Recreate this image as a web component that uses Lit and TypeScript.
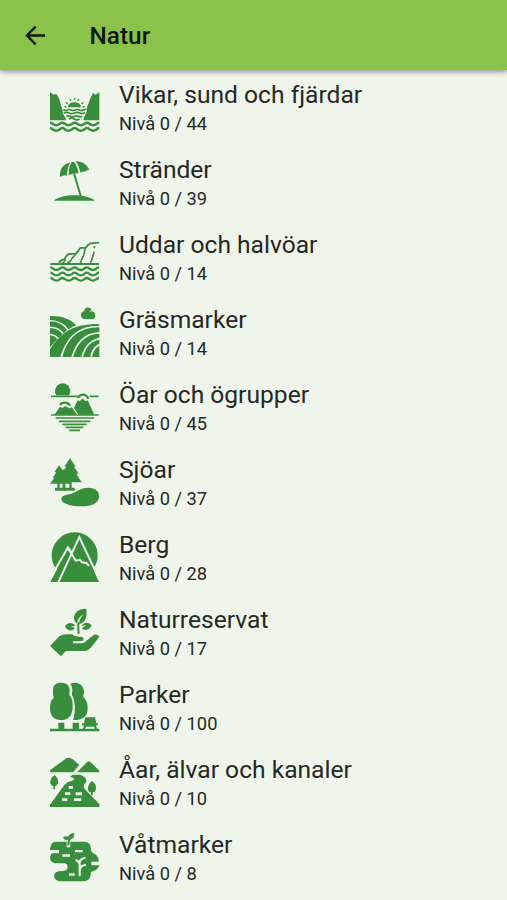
import { LitElement, html, css, svg } from "lit";
import { customElement, property } from "lit/decorators.js";

// Scalloped water line: arcs that dip between rounded crests.
const ripple = (y: number, x = 31, n = 3, w = 49, h = 7) => {
  let d = `M${x} ${y}`;
  for (let i = 0; i < n; i++) {
    d += `c${w * 0.18} 0 ${w * 0.25} ${h} ${w / 2} ${h}s${w * 0.32} ${-h} ${w / 2} ${-h}`;
  }
  return d;
};

const icons = {
  bay: svg`
    <path d="M30 37L42 44L49 41L58 57L62 74L68 91L69 101L76 113L78 121H30Z M178 37L166 44L159 39L150 57L146 70L142 77L140 91L139 98L132 112L130 121H178Z"/>
    <path d="M84 82C84 72 92 67 103 67S123 72 123 82Z"/>
    <g class="line" stroke-width="4.2">
      <path d="M73 80l6 1M128 81l6-1M78 67l5 5M125 72l5-5M90 57l3 6M114 63l3-6M104 54v5"/>
      <path d="M70 89q6 4 12 1t12 0t12 0t12 0t12 0t9-1" stroke-width="5"/>
      <path d="M71 99q8-4 16 0t16 0t16 0t16-1" stroke-width="5"/>
      <path d="M79 109q6-3 12 0t12 0t12 0t12 0" stroke-width="5"/>
      <path d="M87 117q8-5 16 0t16 0" stroke-width="5"/>
    </g>
    <path class="line" stroke-width="7.5" d="${ripple(128, 30, 4, 37, 8)}"/>
    <path class="line" stroke-width="7.5" d="${ripple(144, 30, 4, 37, 8)}"/>`,
  beach: svg`
    <path d="M60 81C59 58 68 43 91 37C84 50 81 62 81 77Q69 74 60 81Z"/>
    <path d="M95 36L102 35C109 43 113 55 116 70Q100 68 86 76C86 60 88 47 95 36Z"/>
    <path d="M107 34C126 33 142 44 148 60Q139 59 134 65Q128 63 121 68C118 54 114 43 107 34Z"/>
    <path class="line" stroke-width="6" d="M102 70L122 138"/>
    <path d="M41 152C55 141 79 136 103 136S151 141 165 152Z"/>`,
  headland: svg`
    <path class="line" stroke-width="5.5" d="M31 102H177"/>
    <path class="line" stroke-width="5.5" stroke-linejoin="round" d="M57 101C58 93 65 89 74 88L78 79L86 72L108 71L116 61L121 54L137 53L143 46L153 40L177 38"/>
    <path class="line" stroke-width="5" d="M75 89C76 97 70 98 64 101M107 72C104 80 98 80 95 87C92 95 88 94 82 101M137 53C132 62 134 76 127 84C122 90 125 98 118 102"/>
    <path class="line" stroke-width="5" d="M164 48L163 55M162 65L161 72C157 78 158 91 151 98"/>
    <g class="line" stroke-width="7">
      <path d="${ripple(112, 31, 4, 36.5, 8)}"/>
      <path d="${ripple(128, 31, 4, 36.5, 8)}"/>
      <path d="${ripple(144, 31, 4, 36.5, 8)}"/>
    </g>`,
  fields: svg`
    <path d="M30 39C66 38 91 48 109 67Q96 72 86 79C72 60 53 52 30 51Z"/>
    <path d="M30 55C51 55 69 64 81 82L71 90C61 77 48 71 30 71Z"/>
    <path d="M30 75C46 75 58 81 68 93L56 105C49 97 41 93 30 92Z"/>
    <path d="M30 97Q43 98 52 108L30 133Z"/>
    <path d="M30 139C63 87 101 62 178 63V68C116 67 79 101 61 162H30Z"/>
    <path d="M67 162C84 104 114 74 178 73V87C133 89 107 118 94 162Z"/>
    <path d="M99 162C112 121 135 93 178 92V104C149 110 131 132 124 162Z"/>
    <path d="M129 162C136 134 151 115 178 110V122C163 129 153 143 151 162Z"/>
    <path d="M156 162Q160 138 178 128V162Z"/>
    <path d="M134 48A11 11 0 0 1 123 36C123 29 128 25 133 25C131 12 151 9 154 20L147 27C156 20 167 29 166 38C166 44 162 48 158 48Z"/>`,
  islands: svg`
    <path d="M49 52A23 23 0 1 1 87 52Z"/>
    <path class="line" stroke-width="5" d="M33 55H113M149 55H176"/>
    <path d="M43 110L60 86Q67 92 72 86Q79 82 84 89Q90 93 95 87L111 110Z"/>
    <path d="M102 89L113 67Q118 72 123 66Q128 59 133 66Q137 72 143 67L163 110H115Z"/>
    <path class="line" stroke-width="6.5" d="M60 81Q64 74 74 74T91 83M113 60Q119 50 129 50T145 62"/>
    <path class="line" stroke-width="5" d="M33 111H176M47 120H162M57 130H151M67 139H140M77 148H130M88 157H120"/>`,
  lake: svg`
    <path d="M90 18L107 44H102L116 65H109L125 91H95V107H101Q105 107 105 112V116H45V110Q45 107 49 107H52V95H30L43 77H38L49 61H43L57 40L67 53H72L79 44H73Z"/>
    <path class="cut" d="M59 95H68V107H59ZM76 95H88V107H76Z"/>
    <path d="M64 142C64 131 77 129 88 127C108 123 116 108 145 107C166 107 178 118 177 134C176 154 154 164 121 163C91 163 65 155 64 142Z"/>`,
  mountain: svg`
    <path d="M47 124A69 69 0 1 1 161 124Z"/>
    <path d="M32 165L85 58L101 66L119 28L176 165Z"/>
    <g class="gap">
      <path d="M28 158L84 61L95 77"/>
      <path d="M52 172L118 30L178 158"/>
      <path d="M82 61L108 102L119 98L126 106L139 108L147 117"/>
    </g>
    <path d="M32 165L84 72L90 82L50 165Z"/>
    <path d="M62 165L94 97L105 104L118 103L124 111L136 113L151 123L155 118L176 165Z"/>`,
  reserve: svg`
    <path d="M30 132L58 103Q66 97 78 97H97Q103 105 124 104Q133 106 130 113Q128 118 119 118H99V124H126Q135 123 139 116L162 98Q174 96 178 104L155 134Q145 146 134 147H85Q78 146 74 151L63 163Z"/>
    <path d="M139 20C142 46 136 63 116 66C119 52 123 45 132 36C119 43 112 53 110 65C94 47 103 20 139 20Z"/>
    <path d="M75 73C83 60 99 60 106 72L92 74L105 78C96 90 80 87 75 73Z"/>
    <path d="M155 70C146 60 132 59 125 72L139 70L125 79C136 89 149 83 155 70Z"/>
    <path class="line" stroke-width="6" d="M116 61C113 73 115 82 116 96"/>`,
  park: svg`
    <path d="M39 38C39 22 51 16 64 17C79 17 90 27 89 42Q89 47 88 53C94 61 99 71 98 88C99 114 85 131 63 129C41 130 30 116 30 94C30 78 34 68 41 62Q38 51 39 38Z"/>
    <path d="M91 20C111 11 133 23 132 45Q132 53 129 58C139 69 143 79 143 92C144 117 126 132 99 128C108 112 106 68 95 52C99 40 97 28 91 20Z"/>
    <path d="M55 137H73V155H98V137H117V155H178V163H30V155H55Z"/>
    <path d="M136 121H165L169 139H174V145H168L171 156H165L162 149H138L135 156H129L132 145H126V139H132Z"/>`,
  river: svg`
    <path d="M30 55L73 23Q85 12 98 22L118 39L99 61H31Z"/>
    <path d="M111 61L139 32Q145 23 154 32L178 56V61Z"/>
    <path d="M43 69C53 76 55 84 54 91C54 98 49 102 45 103V112H40V103C32 99 29 94 31 87Q33 76 43 69Z"/>
    <path d="M156 87C166 94 169 102 168 109C167 119 161 122 158 122V130H153V122C145 119 142 112 144 104Q147 93 156 87Z"/>
    <path d="M90 74L99 68H121C136 73 144 85 136 94Q125 102 137 114L178 156V165H30V158L73 99Q82 89 94 87Q104 84 102 79Z"/>
    <path class="cut" d="M86 102H99V110H86ZM75 121H91V129H75ZM107 121H126V130H107ZM66 139H82V147H66ZM102 139H124V147H102Z"/>`,
  wetland: svg`
    <path d="M45 44H80V61H91V44H133Q152 44 153 66C153 76 160 78 166 82Q176 90 176 104H154V115H178Q176 129 153 135Q153 162 132 163H63C39 163 37 138 52 134Q55 132 66 132C80 131 83 126 83 119Q83 112 75 109H49Q34 108 31 98C29 91 31 84 36 79H57V69H30C31 56 35 46 45 44Z"/>
    <path class="line" stroke-width="6" d="M85 55Q86 43 88 37Q92 31 101 30"/>
    <path d="M69 31C80 25 86 28 89 37C78 41 72 38 69 31ZM84 34Q83 20 103 18Q104 28 93 34Z"/>
    <path class="cut" d="M105 69H128V76H105ZM67 82H90V89H67ZM87 139H104V146H87Z"/>
    <path class="gap thin" d="M119 145V113Q119 102 109 100M119 106Q120 96 134 93M121 125Q122 117 135 114"/>`,
};

type IconName = keyof typeof icons;

// y is the vertical start of each icon's viewBox.
const categories: { icon: IconName; y: number; title: string; total: number }[] = [
  { icon: "bay", y: 0, title: "Vikar, sund och fjärdar", total: 44 },
  { icon: "beach", y: 15, title: "Stränder", total: 39 },
  { icon: "headland", y: 0, title: "Uddar och halvöar", total: 14 },
  { icon: "fields", y: 6, title: "Gräsmarker", total: 14 },
  { icon: "islands", y: 6, title: "Öar och ögrupper", total: 45 },
  { icon: "lake", y: 9, title: "Sjöar", total: 37 },
  { icon: "mountain", y: 9, title: "Berg", total: 28 },
  { icon: "reserve", y: 9, title: "Naturreservat", total: 17 },
  { icon: "park", y: 9, title: "Parker", total: 100 },
  { icon: "river", y: 9, title: "Åar, älvar och kanaler", total: 10 },
  { icon: "wetland", y: 9, title: "Våtmarker", total: 8 },
];

@customElement("category-row")
export class CategoryRow extends LitElement {
  @property() icon: IconName = "bay";
  @property({ type: Number }) top = 0;
  @property() heading = "";
  @property({ type: Number }) total = 0;

  static styles = css`
    :host { display: flex; height: 75px; padding-left: 40px; box-sizing: border-box; }
    svg { width: 70px; height: 60px; margin-top: 5px; flex: none; fill: #388e3c; overflow: visible; }
    .line { fill: none; stroke: #388e3c; }
    .cut { fill: #eff5ea; }
    .gap { fill: none; stroke: #eff5ea; stroke-width: 6; }
    .thin { stroke-width: 6.5; stroke-linecap: round; }
    .text { margin-left: 9px; white-space: nowrap; color: #252825; }
    .title { font-size: 24.6px; line-height: 30px; margin-top: 5px; }
    .level { font-size: 18.3px; line-height: 22px; margin-top: 3px; }
  `;

  render() {
    return html`
      <svg viewBox="0 ${this.top} 210 180" aria-hidden="true">${icons[this.icon]}</svg>
      <div class="text">
        <div class="title">${this.heading}</div>
        <div class="level">Nivå 0 / ${this.total}</div>
      </div>
    `;
  }
}

@customElement("app-root")
export class AppRoot extends LitElement {
  static styles = css`
    :host {
      display: flex; flex-direction: column; height: 900px; overflow: hidden;
      background: #eff5ea; font-family: Roboto, "Liberation Sans", sans-serif;
    }
    header {
      display: flex; align-items: center; height: 70px; flex: none; box-sizing: border-box;
      padding: 1px 0 0 25px; background: #8bc34a; box-shadow: 0 1px 6px rgba(0, 0, 0, 0.5);
    }
    .back { width: 21px; height: 21px; flex: none; }
    h1 { margin: 0 0 0 43.5px; font-size: 24.4px; line-height: 30px; font-weight: 500; color: #0b1705; }
    main { padding-top: 5px; }
  `;

  render() {
    return html`
      <header>
        <svg class="back" viewBox="0 0 21 21" fill="none" stroke="#0b1705" stroke-width="2.3">
          <path d="M20 10.5H2.5M10.7 1.6L1.8 10.5L10.7 19.4" />
        </svg>
        <h1>Natur</h1>
      </header>
      <main>
        ${categories.map(
          (c) => html`<category-row .icon=${c.icon} .top=${c.y} .heading=${c.title} .total=${c.total}></category-row>`
        )}
      </main>
    `;
  }
}
